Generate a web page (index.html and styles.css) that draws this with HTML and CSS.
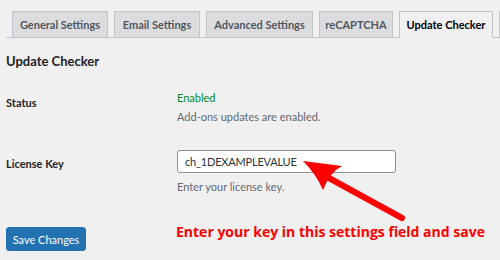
FILE: index.html
```html
<!DOCTYPE html>
<html lang="en">
<head>
    <meta charset="UTF-8">
    <title>Update Checker</title>
    <link rel="stylesheet" href="styles.css">
</head>
<body>
    <div class="wrap">
        <nav class="tabs">
            <a class="tab tab-general">General Settings</a>
            <a class="tab tab-email">Email Settings</a>
            <a class="tab tab-advanced">Advanced Settings</a>
            <a class="tab tab-captcha">reCAPTCHA</a>
            <a class="tab tab-update active">Update Checker</a>
            <a class="tab tab-more"></a>
        </nav>
        <h2 class="title">Update Checker</h2>
        <div class="form">
            <div class="row row-status">
                <div class="label">Status</div>
                <div class="field">
                    <div class="enabled">Enabled</div>
                    <p class="desc">Add-ons updates are enabled.</p>
                </div>
            </div>
            <div class="row row-key">
                <div class="label">License Key</div>
                <div class="field">
                    <input class="input" type="text" value="ch_1DEXAMPLEVALUE">
                    <p class="desc">Enter your license key.</p>
                </div>
            </div>
        </div>
        <div class="footer">
            <button class="button">Save Changes</button>
            <span class="note">Enter your key in this settings field and save</span>
        </div>
        <svg class="arrow" width="500" height="260" viewBox="0 0 500 260">
            <line x1="318" y1="172" x2="402" y2="218" stroke="#ff0000" stroke-width="6" stroke-linecap="round"/>
            <path d="M303 161 L342 166 Q330 172 323 190 Q316 174 303 161 Z" fill="#ff0000"/>
        </svg>
    </div>
</body>
</html>
```

FILE: styles.css
```css
body {
    margin: 0;
    background-color: #f0f0f1;
    font-family: Lato, "Open Sans", sans-serif;
    font-size: 11px;
    color: #1d2327;
}
.wrap {
    position: relative;
    width: 500px;
    height: 260px;
    overflow: hidden;
    padding: 0 0 0 6px;
    box-sizing: border-box;
}
.tabs {
    display: flex;
    gap: 6px;
    padding: 11px 0 0 6px;
    border-bottom: 1px solid #c3c4c7;
    height: 26px;
    white-space: nowrap;
}
.tab {
    display: block;
    box-sizing: border-box;
    height: 27px;
    line-height: 25px;
    text-align: center;
    font-weight: 700;
    font-size: 11px;
    color: #50575e;
    background-color: #dcdcde;
    border: 1px solid #c3c4c7;
    flex-shrink: 0;
    overflow: hidden;
}
.tab-general { width: 96px; }
.tab-email { width: 86px; }
.tab-advanced { width: 107px; }
.tab-captcha { width: 74px; }
.tab-update { width: 94px; }
.tab-more { width: 40px; }
.tab.active {
    background-color: #f0f0f1;
    color: #000;
    border-bottom-color: #f0f0f1;
}
.title {
    margin: 14px 0 0;
    font-size: 13px;
    font-weight: 700;
    line-height: 18px;
}
.row {
    display: flex;
}
.label {
    width: 171px;
    font-weight: 700;
    font-size: 11px;
}
.row-status {
    margin-top: 19px;
}
.row-status .label {
    padding-top: 7px;
}
.enabled {
    color: #008a20;
    line-height: 18px;
}
.desc {
    margin: 1px 0 0;
    color: #646970;
    line-height: 18px;
}
.row-key {
    margin-top: 24px;
}
.row-key .label {
    padding-top: 7px;
}
.input {
    box-sizing: border-box;
    width: 219px;
    height: 23px;
    padding: 0 7px;
    font-family: inherit;
    font-size: 11px;
    letter-spacing: -0.2px;
    color: #2c3338;
    border: 1px solid #8c8f94;
    border-radius: 3px;
    background-color: #fff;
    display: block;
    margin-bottom: 5px;
}
.footer {
    display: flex;
    align-items: flex-start;
    margin-top: 31px;
}
.button {
    box-sizing: border-box;
    width: 80px;
    height: 24px;
    padding: 0;
    font-family: inherit;
    font-size: 11px;
    color: #fff;
    background-color: #2271b1;
    border: 1px solid #2271b1;
    border-radius: 3px;
}
.note {
    margin: -4px 0 0 90px;
    line-height: 18px;
    color: #ff0000;
    font-family: "Open Sans", sans-serif;
    font-weight: 700;
    font-size: 14px;
}
.arrow {
    position: absolute;
    left: 0;
    top: 0;
}
```
